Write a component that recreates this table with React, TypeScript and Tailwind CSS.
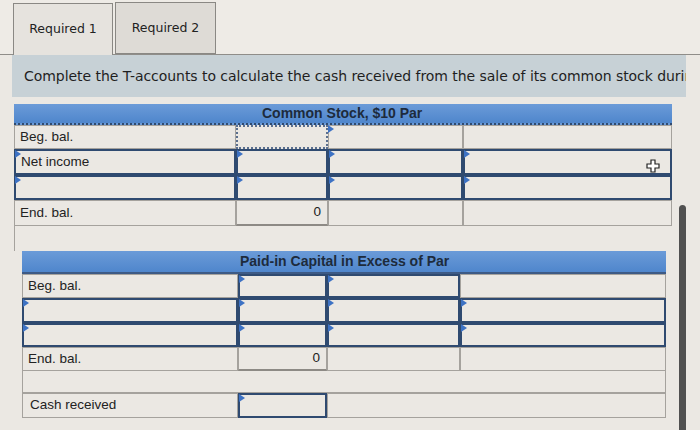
import React from 'react'

type Kind = 'plain' | 'input' | 'dotted'

function Cell({ w, h, kind = 'plain', mark = false, children, right = false }: {
  w: number; h: number; kind?: Kind; mark?: boolean; children?: React.ReactNode; right?: boolean
}) {
  const border =
    kind === 'input'
      ? 'border-2 border-[#2f4a70]'
      : kind === 'dotted'
      ? 'border-2 border-dotted border-[#5a6f8f]'
      : 'border border-[#a5a29d]'
  return (
    <div
      className={`relative flex items-center shrink-0 bg-[#ebe8e3] text-[13.5px] text-[#222] ${border} ${right ? 'justify-end pr-[6px] border-b-2 border-b-[#8d8a85]' : 'pl-[5px]'}`}
      style={{ width: w, height: h }}
    >
      {mark && (
        <span className="absolute left-[-1px] top-[-1px] w-0 h-0 border-y-[4px] border-y-transparent border-l-[6px] border-l-[#3d72c4]" />
      )}
      {children}
    </div>
  )
}

type RowSpec = { h: number; cells: { kind?: Kind; mark?: boolean; text?: string; right?: boolean }[] }

function TAccount({ title, cols, rows, padTitle, headH, dotted }: {
  title: string; cols: number[]; rows: RowSpec[]; padTitle: number; headH: number; dotted?: boolean
}) {
  const total = cols.reduce((a, b) => a + b, 0)
  return (
    <div className="flex flex-col" style={{ width: total }}>
      <div
        className={`flex items-center bg-gradient-to-b from-[#6b9bd8] to-[#4f86cc] font-bold text-[14px] text-[#1d2b3c] border-b-2 ${dotted ? 'border-dotted border-[#2f4a70]' : 'border-[#3d5a85]'}`}
        style={{ height: headH }}
      >
        <span style={{ paddingLeft: cols[0] + padTitle }}>{title}</span>
      </div>
      {rows.map((r, i) => (
        <div key={i} className="flex">
          {r.cells.map((c, j) => (
            <Cell key={j} w={cols[j]} h={r.h} kind={c.kind} mark={c.mark} right={c.right}>
              {c.text}
            </Cell>
          ))}
        </div>
      ))}
    </div>
  )
}

export default function App() {
  const cols1 = [222, 92, 135, 209]
  const cols2 = [216, 89, 133, 206]

  const rows1: RowSpec[] = [
    { h: 24, cells: [{ text: 'Beg. bal.' }, { kind: 'dotted' }, { mark: true }, {}] },
    { h: 26, cells: [{ kind: 'input', mark: true, text: 'Net income' }, { kind: 'input', mark: true }, { kind: 'input', mark: true }, { kind: 'input', mark: true }] },
    { h: 25, cells: [{ kind: 'input', mark: true }, { kind: 'input', mark: true }, { kind: 'input', mark: true }, { kind: 'input', mark: true }] },
    { h: 26, cells: [{ text: 'End. bal.' }, { text: '0', right: true }, {}, {}] },
  ]

  const rows2: RowSpec[] = [
    { h: 24, cells: [{ text: 'Beg. bal.' }, { kind: 'input', mark: true }, { kind: 'input', mark: true }, {}] },
    { h: 25, cells: [{ kind: 'input', mark: true }, { kind: 'input', mark: true }, { kind: 'input', mark: true }, { kind: 'input', mark: true }] },
    { h: 24, cells: [{ kind: 'input', mark: true }, { kind: 'input', mark: true }, { kind: 'input', mark: true }, { kind: 'input', mark: true }] },
    { h: 24, cells: [{ text: 'End. bal.' }, { text: '0', right: true }, {}, {}] },
  ]

  return (
    <div className="w-[700px] h-[430px] overflow-hidden bg-[#ebe8e3] font-['Liberation_Sans',Arial,sans-serif] relative">
      {/* tabs */}
      <div className="flex items-end h-[55px] pl-[13px] pr-[14px] bg-[#eeebe6] border-b border-[#8f8d89]">
        <div className="w-[100px] h-[52px] flex items-center justify-center bg-[#e6e3de] border border-b-0 border-[#8a8884] font-['DejaVu_Sans',Verdana,sans-serif] text-[12.5px] text-[#222] -mb-px">
          Required 1
        </div>
        <div className="ml-[2px] w-[101px] h-[52px] flex items-center justify-center bg-[#dedbd6] border border-[#8a8884] font-['DejaVu_Sans',Verdana,sans-serif] text-[12.5px] text-[#222] self-start mt-[2px]">
          Required 2
        </div>
      </div>

      {/* instruction */}
      <div className="ml-[12px] w-[674px] h-[42px] flex items-center pl-[12px] bg-[#c7d1d6] overflow-hidden whitespace-nowrap font-['DejaVu_Sans',Verdana,sans-serif] text-[14px] tracking-[-0.05px] text-[#1f1f1f]">
        Complete the T-accounts to calculate the cash received from the sale of its common stock during 2024.
      </div>

      <div className="flex flex-col pt-[7px] pl-[14px]">
        <TAccount title="Common Stock, $10 Par" cols={cols1} rows={rows1} padTitle={26} headH={21} dotted />
        <div className="h-[25px] w-[658px] border-l border-[#a5a29d]" />
        <div className="pl-[8px] flex flex-col">
          <TAccount title="Paid-in Capital in Excess of Par" cols={cols2} rows={rows2} padTitle={2} headH={23} />
          <div className="h-[22px] w-[644px] border border-t-0 border-[#a5a29d] bg-[#ebe8e3]" />
          <div className="flex">
            <Cell w={216} h={25}>
              <span className="pl-[2px]">Cash received</span>
            </Cell>
            <Cell w={89} h={25} kind="input" mark />
            <Cell w={339} h={25} />
          </div>
        </div>
      </div>

      {/* plus cursor */}
      <svg className="absolute left-[646px] top-[159px]" width="14" height="14" viewBox="0 0 14 14">
        <path d="M5 1h4v4h4v4H9v4H5V9H1V5h4z" fill="#fff" stroke="#222" strokeWidth="1.2" />
      </svg>

      {/* scrollbar */}
      <div className="absolute left-[679px] top-[205px] w-[7px] h-[230px] rounded-t-full bg-[#505050]" />
    </div>
  )
}
